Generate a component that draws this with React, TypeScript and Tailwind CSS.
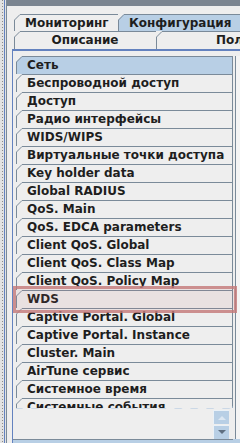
import React from "react";

const items = [
  "Сеть",
  "Беспроводной доступ",
  "Доступ",
  "Радио интерфейсы",
  "WIDS/WIPS",
  "Виртуальные точки доступа",
  "Key holder data",
  "Global RADIUS",
  "QoS. Main",
  "QoS. EDCA parameters",
  "Client QoS. Global",
  "Client QoS. Class Map",
  "Client QoS. Policy Map",
  "WDS",
  "Captive Portal. Global",
  "Captive Portal. Instance",
  "Cluster. Main",
  "AirTune сервис",
  "Системное время",
  "Системные события",
];

// slanted top-left corner, like the Metal tabs
function Corner({ behind, line }: { behind: string; line: string }) {
  return (
    <svg className="absolute left-0 top-0 w-full h-full pointer-events-none" overflow="visible">
      <polygon points="0,0 6,0 0,6" fill={behind} />
      <line x1="0.5" y1="6" x2="6" y2="0.5" stroke={line} />
      <line x1="6" y1="0.5" x2="100%" y2="0.5" stroke={line} />
      <line x1="0.5" y1="6" x2="0.5" y2="100%" stroke={line} />
    </svg>
  );
}

function Tab({ label, className, blue, center }: { label: string; className: string; blue?: boolean; center?: boolean }) {
  return (
    <div
      className={`relative shrink-0 flex items-center ${blue ? "bg-[#b8cfe5]" : "bg-[#eeeeee]"} ${center ? "justify-center" : "pl-[11px]"} ${className}`}
    >
      <Corner behind="#eeeeee" line="#7a8a99" />
      <span className="relative whitespace-nowrap">{label}</span>
    </div>
  );
}

function Row({ label, selected }: { label: string; selected?: boolean }) {
  return (
    <div className={`relative h-[18px] shrink-0 flex items-center pl-[11px] ${selected ? "bg-[#b8cfe5]" : "bg-[#eeeeee]"}`}>
      <Corner behind="#eeeeee" line="#7a8a99" />
      <span className="relative whitespace-nowrap">{label}</span>
    </div>
  );
}

export default function App() {
  return (
    <div className="w-[240px] h-[443px] flex bg-[#eeeeee] overflow-hidden text-[12px] font-bold text-[#1e1e1e] font-['DejaVu_Sans',sans-serif] leading-none">
      {/* left edge */}
      <div className="w-[6px] h-full flex shrink-0 bg-[#e2e2e2]">
        <div className="w-[2px]" />
        <div className="w-[1px] bg-[repeating-linear-gradient(#8c8c8c_0_1px,transparent_1px_3px)]" />
        <div className="w-[1px]" />
        <div className="w-[1px] bg-[#6382bf]" />
        <div className="w-[1px]" />
      </div>

      <div className="flex-1 flex flex-col min-w-0 border-l border-[#7a8a99]">
        <div className="h-[6px] bg-[#7b8591] shrink-0" />
        <div className="h-[8px] shrink-0" />

        {/* tab rows */}
        <div className="h-[17px] flex shrink-0 pl-[7px] overflow-hidden">
          <Tab label="Мониторинг" className="w-[104px]" />
          <Tab label="Конфигурация" className="w-[140px] pl-[10px]" blue />
        </div>
        <div className="h-[18px] flex shrink-0 pl-[7px] overflow-hidden">
          <Tab label="Описание" className="w-[142px]" center />
          <Tab label="Пол" className="w-[84px] pl-[60px]" />
        </div>

        {/* content */}
        <div className="relative flex-1 flex ml-[5px] border-t-2 border-l border-[#6382bf] min-h-0">
          <div className="flex-1 flex flex-col relative min-w-0">
            <div className="flex-1 flex flex-col pt-[5px] pl-[3px] min-h-0">
              <div className="h-[352px] flex flex-col overflow-hidden border-r border-[#7a8a99]">
                {items.map((it, i) => (
                  <Row key={it} label={it} selected={i === 0} />
                ))}
              </div>
              <svg className="w-full h-[4px] shrink-0 -mt-[2px]" viewBox="0 0 218 4" preserveAspectRatio="none">
                <polyline
                  points="0,2 6,2 9,1 13,1 16,2 22,2 25,1 29,1 32,2 38,2 41,1 45,1 48,2 54,2 57,1 61,1 64,2 70,2 73,1 77,1 80,2 86,2 89,1 93,1 96,2 102,2 105,1 109,1 112,2 118,2 121,1 125,1 128,2 134,2 137,1 141,1 144,2 150,2 153,1 157,1 160,2 166,2 169,1 173,1 176,2 182,2 185,1 189,1 192,2 198,2 201,1 205,1 208,2 214,2 218,1"
                  fill="none"
                  stroke="#a9c2de"
                />
              </svg>
              <div className="flex-1" />
            </div>
            <div className="h-[1px] bg-[#7a8a99] shrink-0" />
            <div className="h-[3px] bg-[#b8cfe5] shrink-0" />

            {/* scroll arrows */}
            <div className="absolute right-[4px] bottom-[4px] w-[16px] flex flex-col gap-[1px]">
              <div className="h-[14px] bg-[#b8cfe5] border-t border-l border-white/70 flex items-center justify-center">
                <svg width="8" height="5" viewBox="0 0 8 5">
                  <polygon points="0,5 8,5 4,1" fill="#dce7f2" />
                </svg>
              </div>
              <div className="h-[14px] bg-[#b8cfe5] border-t border-l border-white/70 flex items-center justify-center">
                <svg width="8" height="5" viewBox="0 0 8 5">
                  <polygon points="0,0 8,0 4,4" fill="#5f6f80" />
                </svg>
              </div>
            </div>
          </div>

          {/* right strip */}
          <div className="w-[7px] shrink-0 flex flex-col">
            <div className="h-[5px]" />
            <div className="flex-1 flex">
              <div className="w-[2px]" />
              <div className="w-[1px] bg-[#7a8a99]" />
              <div className="flex-1 bg-[#f4f4f4]" />
            </div>
            <div className="h-[4px] bg-[#b8cfe5]" />
          </div>

          {/* highlight over the WDS row */}
          <div className="absolute left-0 top-[235px] w-[224px] h-[27px] border-[3px] border-[#c47a7a]/80 bg-[#c47a7a]/10 pointer-events-none" />
        </div>
      </div>
    </div>
  );
}
